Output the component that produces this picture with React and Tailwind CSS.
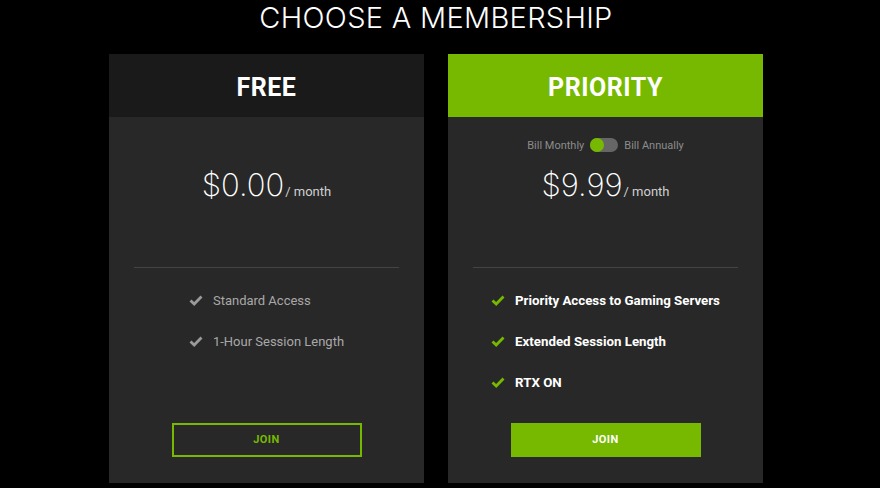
import React from "react";

function Check({ color }) {
  return (
    <svg width="14" height="11" viewBox="0 0 14 11" className="shrink-0">
      <polyline points="1.5,5.5 5.2,9 12.5,1.5" fill="none" stroke={color} strokeWidth="2.8" strokeLinecap="butt" strokeLinejoin="miter" />
    </svg>
  );
}

function Card({ title, price, features, priority }) {
  return (
    <div className="w-[315px] h-[429px] bg-[#282828] flex flex-col">
      <div className={`h-[63px] flex items-center justify-center pt-[4px] ${priority ? "bg-[#76b900]" : "bg-[#1a1a1a]"}`}>
        <span className="text-white font-bold text-[25px] leading-none tracking-[0.5px]" style={{ fontFamily: "Roboto, 'Noto Sans', sans-serif" }}>
          {title}
        </span>
      </div>
      <div className={`mt-[21px] h-[14px] flex items-center justify-center gap-[6px] ${priority ? "" : "invisible"}`}>
        <span className="text-[11px] leading-none text-[#8c8c8c]" style={{ fontFamily: "Roboto, sans-serif" }}>Bill Monthly</span>
        <span className="relative w-[28px] h-[14px] rounded-full bg-[#666666] flex items-center">
          <span className="w-[14px] h-[14px] rounded-full bg-[#76b900]" />
        </span>
        <span className="text-[11px] leading-none text-[#8c8c8c]" style={{ fontFamily: "Roboto, sans-serif" }}>Bill Annually</span>
      </div>
      <div className="mt-[17px] flex items-baseline justify-center" style={{ fontFamily: "Inter, sans-serif" }}>
        <span className="text-[31px] leading-none font-extralight text-white">{price}</span>
        <span className="text-[13px] leading-none text-[#d0d0d0] ml-[1px]" style={{ fontFamily: "Roboto, sans-serif" }}>/ month</span>
      </div>
      <div className="mt-[67px] mx-[25px] h-px bg-[#444444]" />
      <div className="mt-[12px] flex justify-center">
        <div className="flex flex-col">
          {features.map((f) => (
            <div key={f} className="h-[41px] flex items-center gap-[10px]">
              <Check color={priority ? "#76b900" : "#9a9a9a"} />
              <span
                className={`leading-none ${priority ? "text-[13.3px] font-bold text-white" : "text-[13px] text-[#a8a8a8]"}`}
                style={{ fontFamily: "Roboto, sans-serif" }}
              >
                {f}
              </span>
            </div>
          ))}
        </div>
      </div>
      <div className="mt-auto mb-[26px] flex justify-center">
        <div
          className={`w-[190px] h-[34px] flex items-center justify-center text-[11px] font-bold tracking-[0.5px] ${
            priority ? "bg-[#76b900] text-white" : "border-2 border-[#76b900] text-[#76b900]"
          }`}
          style={{ fontFamily: "Roboto, sans-serif" }}
        >
          JOIN
        </div>
      </div>
    </div>
  );
}

export default function App() {
  return (
    <div className="w-[880px] h-[488px] bg-black overflow-hidden">
      <div className="ml-[109px] w-[654px] flex flex-col">
        <div className="pt-[3px] h-[32px] text-center">
          <span className="text-[29px] leading-none font-light text-white tracking-[0.3px]" style={{ fontFamily: "Inter, sans-serif" }}>
            CHOOSE A MEMBERSHIP
          </span>
        </div>
        <div className="mt-[22px] flex gap-6">
          <Card title="FREE" price="$0.00" features={["Standard Access", "1-Hour Session Length"]} />
          <Card
            title="PRIORITY"
            price="$9.99"
            priority
            features={["Priority Access to Gaming Servers", "Extended Session Length", "RTX ON"]}
          />
        </div>
      </div>
    </div>
  );
}
